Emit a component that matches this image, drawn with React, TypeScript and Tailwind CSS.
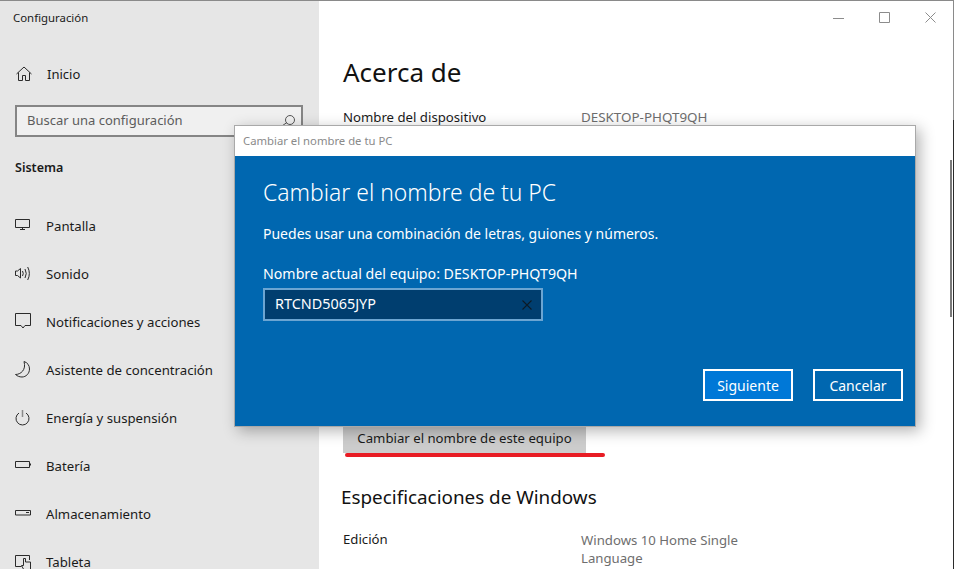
import React from 'react';

const stroke = { fill: 'none', stroke: '#2b2b2b', strokeWidth: 1, className: 'overflow-visible shrink-0' };

function HomeIcon() {
    return (
        <svg width="16" height="16" viewBox="0 0 16 16" {...stroke}>
            <path d="M0.5 8 L8 1 L15.5 8" />
            <path d="M2.5 6.5 V14.5 H6.5 V9.5 H9.5 V14.5 H13.5 V6.5" />
        </svg>
    );
}

function SearchIcon() {
    return (
        <svg width="13" height="13" viewBox="0 0 13 13" fill="none" stroke="#555555" strokeWidth="1">
            <circle cx="8" cy="5" r="4.5" />
            <path d="M5 7.5 L0.6 10.5" />
        </svg>
    );
}

const icons: Record<string, React.ReactNode> = {
    pantalla: (
        <svg width="16" height="16" viewBox="0 0 16 16" {...stroke}>
            <path d="M0.5 1.5 H14.5 V9.5 H0.5 Z" />
            <path d="M7.5 9.5 V11.5 M5 11.5 H10" />
        </svg>
    ),
    sonido: (
        <svg width="16" height="16" viewBox="0 0 16 16" {...stroke}>
            <path d="M0.5 5 H2.5 L5.5 2.5 V12 L2.5 9.5 H0.5 Z" />
            <path d="M7.5 5 Q9 7.5 7.5 10 M10 3 Q12.5 7.5 10 12 M12.7 1 Q16 7.5 12.7 14" />
        </svg>
    ),
    notificaciones: (
        <svg width="16" height="16" viewBox="0 0 16 16" {...stroke}>
            <path d="M0.5 -0.5 H15.5 V11.5 H10 L8 14 L6 11.5 H0.5 Z" />
        </svg>
    ),
    concentracion: (
        <svg width="16" height="16" viewBox="0 0 16 16" {...stroke}>
            <path d="M9 -0.5 C12.5 0.5 14.5 3.5 14.5 7 C14.5 11.5 11 15 7 15 C4.5 15 2 14 0.5 12.5 C5.5 12.5 11.5 8 9 -0.5 Z" />
        </svg>
    ),
    energia: (
        <svg width="16" height="16" viewBox="0 0 16 16" {...stroke}>
            <path d="M7.5 0 V7" stroke="#8a8a8a" strokeWidth="1.5" />
            <path d="M4 3 A6.5 6.5 0 1 0 11 3" />
        </svg>
    ),
    bateria: (
        <svg width="16" height="16" viewBox="0 0 16 16" {...stroke}>
            <path d="M0.5 3.5 H14.5 V9.5 H0.5 Z" />
            <path d="M15.5 5.5 V7.5" />
        </svg>
    ),
    almacenamiento: (
        <svg width="16" height="16" viewBox="0 0 16 16" {...stroke}>
            <path d="M0.5 4.5 H15.5 V9 H0.5 Z" />
            <path d="M11 6.5 H14" />
        </svg>
    ),
    tableta: (
        <svg width="16" height="16" viewBox="0 0 16 16" {...stroke}>
            <path d="M6.5 12.5 H0.5 V1.5 H14.5 V6" />
            <path d="M9 16 L6.5 11.5 L8.5 11.5 V4.5 H10.5 V8 H15.5 V16" />
        </svg>
    ),
};

const navItems = [
    { key: 'pantalla', label: 'Pantalla' },
    { key: 'sonido', label: 'Sonido' },
    { key: 'notificaciones', label: 'Notificaciones y acciones' },
    { key: 'concentracion', label: 'Asistente de concentración' },
    { key: 'energia', label: 'Energía y suspensión' },
    { key: 'bateria', label: 'Batería' },
    { key: 'almacenamiento', label: 'Almacenamiento' },
    { key: 'tableta', label: 'Tableta' },
];

function Sidebar() {
    return (
        <aside className="flex w-[319px] shrink-0 flex-col overflow-hidden bg-[#e6e6e6]">
            <div className="shrink-0 pl-[13px] pt-[9px] text-[11.4px] leading-[16px] text-[#1a1a1a]">Configuración</div>
            <div className="mt-[32px] flex h-[32px] shrink-0 items-center pl-[16px] text-[#1a1a1a]">
                <HomeIcon />
                <span className="ml-[15px] mt-[2px] text-[13px]">Inicio</span>
            </div>
            <div className="ml-[15px] mt-[15px] flex h-[32px] w-[288px] shrink-0 items-center justify-between border-2 border-[#858585] bg-[#f0f0f0] pl-[10px] pr-[6px] text-[13px] text-[#5c5c5c]">
                <span>Buscar una configuración</span>
                <SearchIcon />
            </div>
            <div className="ml-[15px] mt-[21px] shrink-0 text-[12.5px] font-semibold leading-[20px] text-[#1a1a1a]">Sistema</div>
            <nav className="mt-[24px] flex flex-col">
                {navItems.map((item) => (
                    <div key={item.key} className="flex h-[48px] shrink-0 items-center pl-[15px] text-[13.2px] text-[#1a1a1a]">
                        {icons[item.key]}
                        <span className="ml-[15px] mt-[2px]">{item.label}</span>
                    </div>
                ))}
            </nav>
        </aside>
    );
}

function WindowControls() {
    return (
        <div className="flex h-[32px] shrink-0 items-center justify-end gap-[35px] pr-[17px]">
            <svg width="11" height="11" viewBox="0 0 11 11" fill="none" stroke="#8c8c8c"><path d="M0 6.5 H11" /></svg>
            <svg width="11" height="11" viewBox="0 0 11 11" fill="none" stroke="#8c8c8c"><path d="M0.5 0.5 H10.5 V10.5 H0.5 Z" /></svg>
            <svg width="11" height="11" viewBox="0 0 11 11" fill="none" stroke="#8c8c8c"><path d="M0.5 0.5 L10.5 10.5 M10.5 0.5 L0.5 10.5" /></svg>
        </div>
    );
}

function Content() {
    return (
        <main className="flex min-w-0 flex-1 flex-col overflow-hidden bg-white">
            <WindowControls />
            <div className="pl-[24px]">
                <h1 className="mt-[17px] text-[26px] leading-[44px] text-[#111]">Acerca de</h1>
                <div className="mt-[13px] flex text-[13.2px] leading-[20px]">
                    <span className="w-[238px] text-[#1a1a1a]">Nombre del dispositivo</span>
                    <span className="text-[13.4px] text-[#6e6e6e]">DESKTOP-PHQT9QH</span>
                </div>
                <div className="relative mt-[294px] w-fit">
                    <div className="flex h-[32px] w-[243px] items-center justify-center bg-[#cccccc] pt-[3px] text-[13.2px] text-[#1a1a1a]">
                        Cambiar el nombre de este equipo
                    </div>
                    <div className="absolute left-[2px] top-[32px] h-[4px] w-[260px] rounded-full bg-[#e81c24]" />
                </div>
                <h2 className="ml-[-2px] mt-[28px] text-[18.85px] leading-[32px] text-[#111]">Especificaciones de Windows</h2>
                <div className="mt-[17px] flex text-[13.2px] leading-[18px]">
                    <span className="w-[238px] text-[#1a1a1a]">Edición</span>
                    <span className="mt-[1px] w-[180px] text-[#6e6e6e]">Windows 10 Home Single Language</span>
                </div>
            </div>
        </main>
    );
}

function RenameDialog() {
    return (
        <div className="absolute left-[234px] top-[124px] flex h-[302px] w-[682px] flex-col border border-[#a9a9a9] shadow-[4px_4px_14px_rgba(0,0,0,0.3)]">
            <div className="flex h-[30px] shrink-0 items-center bg-white pl-[8px] text-[11.3px] text-[#8a8a8a]">Cambiar el nombre de tu PC</div>
            <div className="flex flex-1 flex-col bg-[#0067b0] pl-[28px] pr-[12px] text-white">
                <div className="mt-[21px] text-[22.9px] font-light leading-[32px]">Cambiar el nombre de tu PC</div>
                <div className="mt-[15px] text-[14px] leading-[20px]">Puedes usar una combinación de letras, guiones y números.</div>
                <div className="mt-[20px] text-[14.2px] leading-[20px]">Nombre actual del equipo: DESKTOP-PHQT9QH</div>
                <div className="mt-[4px] flex h-[33px] w-[280px] items-center justify-between border-2 border-[#6ba5d2] bg-[#003e6f] pl-[10px] pr-[9px] text-[14.4px]">
                    <span className="mb-[2px]">RTCND5065JYP</span>
                    <svg width="10" height="10" viewBox="0 0 10 10" fill="none" stroke="#0d1b26" strokeWidth="1.1"><path d="M0.5 0.5 L9.5 9.5 M9.5 0.5 L0.5 9.5" /></svg>
                </div>
                <div className="mt-[48px] flex justify-end gap-[20px]">
                    <button className="h-[32px] w-[90px] border-2 border-white bg-[#0078d7] text-[14px] text-white">Siguiente</button>
                    <button className="h-[32px] w-[90px] border-2 border-white bg-[#0067b0] text-[14px] text-white">Cancelar</button>
                </div>
            </div>
        </div>
    );
}

export default function App() {
    return (
        <div className="relative flex h-[569px] w-[954px] overflow-hidden border-t border-t-[#8a8a8a] font-['Noto_Sans',sans-serif]">
            <Sidebar />
            <Content />
            <div className="flex w-px shrink-0 flex-col">
                <div className="h-[119px] bg-[#8a8a8a]" />
                <div className="flex-1 bg-[#2b2b2b]" />
            </div>
            <div className="absolute right-[2px] top-[159px] h-[157px] w-[2px] bg-[#7a7a7a]" />
            <RenameDialog />
        </div>
    );
}
